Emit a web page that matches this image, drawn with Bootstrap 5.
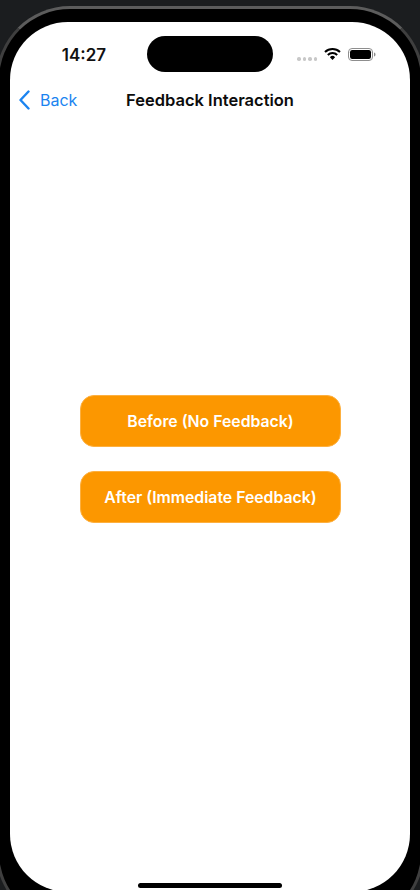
<!DOCTYPE html>
<html lang="en">
<head>
<meta charset="utf-8">
<title>Feedback Interaction</title>
<link href="https://cdn.jsdelivr.net/npm/bootstrap@5.3.0/dist/css/bootstrap.min.css" rel="stylesheet">
<style>
html,body{height:890px;overflow:hidden;background:#1b1d1f;font-family:Inter,"Liberation Sans",sans-serif}
.device-rim{margin:6px -4px 0;height:920px;border:3px solid #3f3f3f;border-top-color:#5c5c5c;border-radius:74px;background:#000;padding:13px 11px 0}
.device-screen{height:870px;background:#fff;border-radius:58px;overflow:hidden}
.status-row{height:65px;padding:14px 0 0 0}
.status-time{width:146px;padding-left:2px;padding-top:2px;font-size:17px;font-weight:600;line-height:34px;color:#111}
.island{width:126px;height:36px;background:#000;border-radius:18px;margin-left:-9px}
.status-icons{padding-left:24px;gap:7px;height:36px}
.sig-dots{gap:2px;margin-top:10px}
.sig-dot{width:3.5px;height:3.5px;border-radius:50%;background:#c8c8c8}
.nav-row{height:26px}
.back-link{left:8px;top:0;gap:9px;color:#1b84f0;font-size:16px;line-height:26px;text-decoration:none}
.nav-title{font-size:16.5px;font-weight:600;line-height:26px;color:#0c0c0c}
.main-area{width:261px;margin-top:282px;margin-left:70px;gap:24px}
.action-btn{height:52px;background:#fc9700;border:1px solid #fdb040;border-radius:14px;color:#fff;font-size:15.8px;font-weight:600;padding:1px 0 0}
.action-btn:hover{background:#fc9700;color:#fff}
.home-bar{width:144px;height:5px;border-radius:3px;background:#000;top:861px;left:128px}
</style>
</head>
<body>
<div class="device-rim">
  <div class="device-screen position-relative">
    <div class="status-row d-flex justify-content-start">
      <div class="status-time text-center">14:27</div>
      <div class="island flex-shrink-0"></div>
      <div class="status-icons d-flex align-items-center">
        <div class="sig-dots d-flex">
          <span class="sig-dot"></span><span class="sig-dot"></span><span class="sig-dot"></span><span class="sig-dot"></span>
        </div>
        <svg width="17" height="14" viewBox="0 0 17 14" aria-hidden="true">
          <path d="M1 5a10.800 10.800 0 0 1 15 0" fill="none" stroke="#000" stroke-width="2"/>
          <path d="M3.800 8a6.800 6.800 0 0 1 9.400 0" fill="none" stroke="#000" stroke-width="2"/>
          <path d="M5.900 10.200a3.600 3.600 0 0 1 5.200 0L8.500 13z" fill="#000"/>
        </svg>
        <svg width="28" height="13" viewBox="0 0 28 13" aria-hidden="true">
          <rect x=".5" y=".5" width="24" height="12" rx="3.5" fill="none" stroke="#8e8e8e"/>
          <rect x="2" y="2" width="21" height="9" rx="2.200" fill="#000"/>
          <path d="M26 4.500c1 .3 1.500 1 1.500 2s-.5 1.700-1.500 2z" fill="#8e8e8e"/>
        </svg>
      </div>
    </div>
    <div class="nav-row position-relative d-flex justify-content-center">
      <a class="back-link position-absolute d-flex align-items-center" href="#">
        <svg width="13" height="20" viewBox="0 0 13 20" aria-hidden="true"><path d="M10.500 1.500 2.500 10l8 8.500" fill="none" stroke="#1b84f0" stroke-width="2.400" stroke-linecap="round" stroke-linejoin="round"/></svg>
        <span>Back</span>
      </a>
      <div class="nav-title">Feedback Interaction</div>
    </div>
    <div class="main-area d-flex flex-column">
      <button type="button" class="btn action-btn">Before (No Feedback)</button>
      <button type="button" class="btn action-btn">After (Immediate Feedback)</button>
    </div>
    <div class="home-bar position-absolute"></div>
  </div>
</div>
<script src="https://cdn.jsdelivr.net/npm/bootstrap@5.3.0/dist/js/bootstrap.bundle.min.js"></script>
</body>
</html>
